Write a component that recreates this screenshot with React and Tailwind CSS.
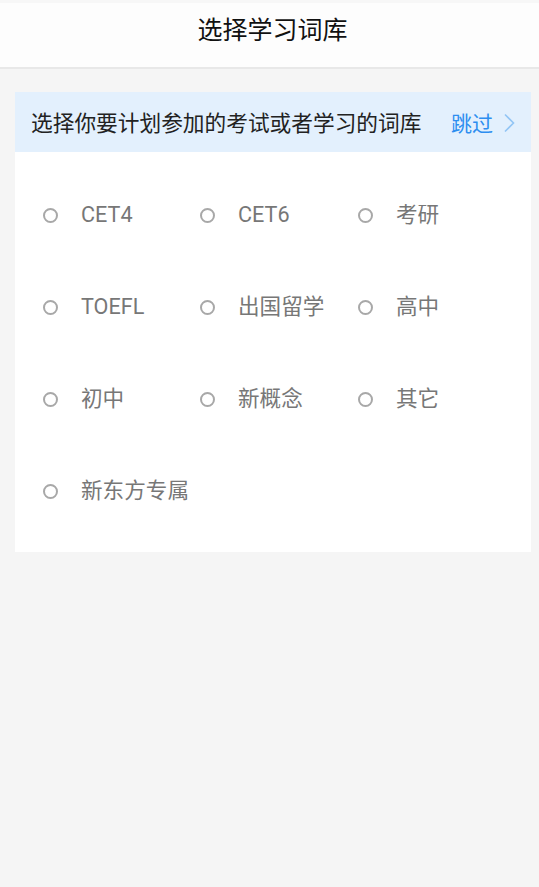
import React from 'react';

const options = ['CET4', 'CET6', '考研', 'TOEFL', '出国留学', '高中', '初中', '新概念', '其它', '新东方专属'];

export default function App() {
  return (
    <div
      className="min-h-[887px] w-full bg-[#f5f5f5]"
      style={{ fontFamily: 'Roboto, "Noto Sans CJK SC", sans-serif' }}
    >
      {/* Header */}
      <div className="bg-[#f7f7f7] pt-[3px]">
        <div className="flex h-[66px] items-center justify-center border-b-2 border-[#e8e8e8] bg-[#fdfdfd] pl-[6px]">
          <h1 className="text-[25px] leading-none text-[#111] -mt-[9px]">选择学习词库</h1>
        </div>
      </div>

      <div className="ml-[15px] mr-[8px] mt-[23px] bg-white">
        {/* Banner */}
        <div className="flex h-[60px] items-center justify-between bg-[#e3f0fd] pl-[16px] pr-[16px] pt-[4px]">
          <span className="text-[21.7px] leading-none text-[#222]">选择你要计划参加的考试或者学习的词库</span>
          <button className="flex items-center gap-[10px] pl-[2px] text-[21px] leading-none text-[#2d8ef0]">
            跳过
            <svg width="12" height="20" viewBox="0 0 12 20" fill="none" className="-mt-[3px]">
              <path d="M2 1.5l8.5 8.5-8.5 8.5" stroke="#93c5f5" strokeWidth="1.6" />
            </svg>
          </button>
        </div>

        {/* Options */}
        <div className="grid grid-cols-[157px_158px_1fr] gap-y-[70px] pl-[28px] pt-[52px] pb-[50px]">
          {options.map((opt) => (
            <label key={opt} className="flex h-[22px] items-center">
              <span className="h-[15px] w-[15px] shrink-0 rounded-full border-2 border-[#a8a8a8]" />
              <span className="ml-[23px] whitespace-nowrap text-[21.6px] leading-none text-[#777]">{opt}</span>
            </label>
          ))}
        </div>
      </div>
    </div>
  );
}
